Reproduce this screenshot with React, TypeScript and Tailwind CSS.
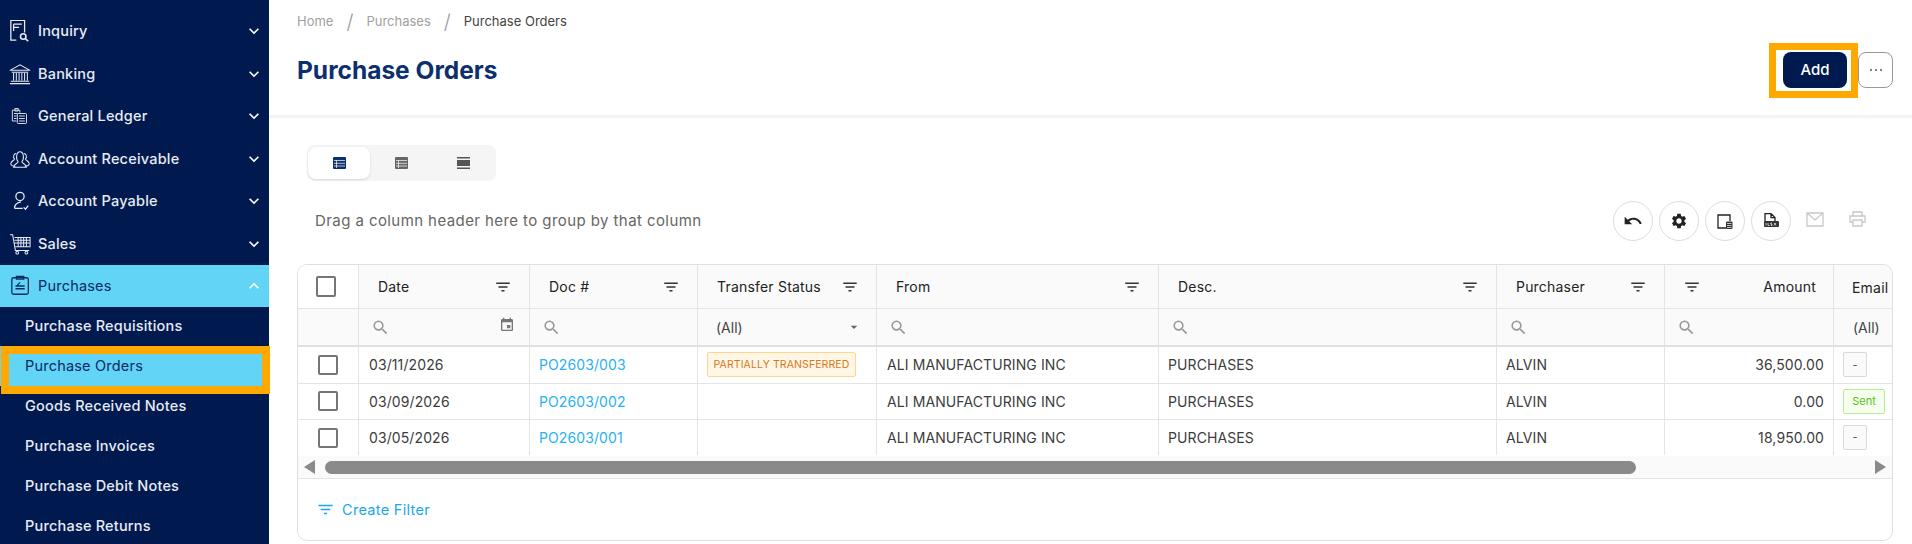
import {
  MdArrowDropDown,
  MdEvent,
  MdFilterList,
  MdKeyboardArrowDown,
  MdKeyboardArrowUp,
  MdSearch,
  MdSettings,
  MdUndo,
} from "react-icons/md";
import type { ReactNode } from "react";

const Ic = ({ children, size = 22 }: { children: ReactNode; size?: number }) => (
  <svg width={size} height={size} viewBox="0 0 24 24" fill="none" stroke="currentColor" strokeWidth="1.1" className="shrink-0">
    {children}
  </svg>
);

const menu = [
  {
    label: "Inquiry",
    icon: (
      <Ic>
        <path d="M8 22H2V0.500h15v13M5 4.500h9M5 8h6M5 4.500V12" strokeWidth="1.4" />
        <circle cx="15.500" cy="18" r="3" strokeWidth="1.700" />
        <path d="m18 20.500 3 2.500" strokeWidth="1.700" />
      </Ic>
    ),
  },
  {
    label: "Banking",
    icon: (
      <Ic>
        <path d="M1 8 12 2l11 6zM3 10h18M5 11v8M8 11v8M11 11v8M14 11v8M17 11v8M20 11v8M2 20h20M1 22.500h22" />
      </Ic>
    ),
  },
  {
    label: "General Ledger",
    icon: (
      <Ic size={20}>
        <path d="M9 18H4V5h9v3M7 3h4v3H7zM6 9h4M6 12h3M6 15h3" />
        <rect x="10" y="9" width="11" height="12" rx="1" />
        <path d="M12 12h7M12 15h7M12 18h7" />
      </Ic>
    ),
  },
  {
    label: "Account Receivable",
    icon: (
      <Ic>
        <path d="M7 20c-3 0-5-1-5-3 0-3 4-3 4-5-2-2-1-6 2-6M17 20c3 0 5-1 5-3 0-3-4-3-4-5 2-2 1-6-2-6" />
        <path d="M5 21c0-4 5-4 5-6-3-3-2-11 2-11s5 8 2 11c0 2 5 2 5 6z" />
      </Ic>
    ),
  },
  {
    label: "Account Payable",
    icon: (
      <Ic>
        <circle cx="12" cy="7" r="4.500" strokeWidth="1.400" />
        <path d="M6 20c0-3 2-6 7-7M6 20h9M16 19l2 2 3-4" strokeWidth="1.400" />
      </Ic>
    ),
  },
  {
    label: "Sales",
    icon: (
      <Ic>
        <path d="M1 2h3l3 17h15M6 5h17v10H7M10 5v10M13 5v10M16 5v10M19 5v10M6 8h17M6 11h17" />
        <circle cx="9" cy="21.500" r="1.500" />
        <circle cx="19" cy="21.500" r="1.500" />
      </Ic>
    ),
  },
];

const subMenu = ["Purchase Requisitions", "Purchase Orders", "Goods Received Notes", "Purchase Invoices", "Purchase Debit Notes", "Purchase Returns"];

const cols = "grid grid-cols-[61px_171px_168px_179px_282px_338px_168px_169px_60px]";

const Sidebar = () => (
  <aside className="relative w-[269px] shrink-0 bg-[#001a4f] pt-[10px] text-[#e8ebf2]">
    {menu.map((m) => (
      <div key={m.label} className="flex h-[42.500px] items-center pl-[9px] pr-[5px]">
        <span className="flex w-[29px] justify-start">{m.icon}</span>
        <span className="flex-1 text-[14.500px] font-medium tracking-[0.2px]">{m.label}</span>
        <MdKeyboardArrowDown size={20} className="text-white" />
      </div>
    ))}
    <div className="flex h-[42px] items-center bg-[#62d4f5] pl-[10px] pr-[5px] text-[#0c2a63]">
      <span className="flex w-[28px]">
        <Ic>
          <rect x="2" y="3" width="18" height="18" rx="2" strokeWidth="1.400" />
          <path d="M7 1.500h8v3H7zM6 15h10M6 12h10M11 8l-3 3" strokeWidth="1.400" />
        </Ic>
      </span>
      <span className="flex-1 text-[14.500px] tracking-[0.2px]">Purchases</span>
      <MdKeyboardArrowUp size={20} className="text-white" />
    </div>
    <div className="-mt-[1px]">
      {subMenu.map((s) => (
        <div
          key={s}
          className={
            s === "Purchase Orders"
              ? "flex h-10 items-center bg-[#62d4f5] pl-[25px] text-[14.500px] tracking-[0.2px] text-[#0c2a63]"
              : "flex h-10 items-center pl-[25px] text-[14.500px] font-medium tracking-[0.2px]"
          }
        >
          {s}
        </div>
      ))}
    </div>
    <div className="absolute left-[1px] top-[346px] h-[48px] w-[269px] border-[8px] border-[#ffa800]" />
  </aside>
);

const TableIcon = ({ active }: { active?: boolean }) => (
  <svg width="13" height="12" viewBox="0 0 13 12" className={active ? "text-[#0c2f6e]" : "text-[#666666]"}>
    <path fill="currentColor" d="M1 0h11a1 1 0 0 1 1 1v10a1 1 0 0 1-1 1H1a1 1 0 0 1-1-1V1a1 1 0 0 1 1-1Z" />
    <path stroke="#fff" strokeWidth="0.700" d="M1 3.500h11M1 6.300h11M1 9h11M3.500 3.500V11" />
  </svg>
);

const ViewTabs = () => (
  <div className="ml-[38px] mt-[27px] flex h-9 w-[189px] items-center rounded-lg bg-[#f5f5f5] pl-[1px]">
    <div className="flex h-8 w-[62px] items-center justify-center rounded-lg bg-white shadow-sm">
      <TableIcon active />
    </div>
    <div className="flex w-[62px] justify-center">
      <TableIcon />
    </div>
    <div className="flex w-[62px] justify-center">
      <svg width="13" height="12" viewBox="0 0 13 12" className="text-[#555555]">
        <path fill="currentColor" d="M0 0h13v1.500H0zM0 3h13v6H0zM0 10.500h13V12H0z" />
      </svg>
    </div>
  </div>
);

const RoundBtn = ({ children }: { children: ReactNode }) => (
  <div className="flex h-10 w-10 items-center justify-center rounded-full border border-[#dddddd] text-[#222222]">{children}</div>
);

const Toolbar = () => (
  <div className="mt-[20px] flex h-10 items-center justify-between pl-[46px] pr-[46px]">
    <span className="text-[15px] tracking-[0.42px] text-[#666666]">Drag a column header here to group by that column</span>
    <div className="flex items-center gap-[6px]">
      <RoundBtn>
        <MdUndo size={20} />
      </RoundBtn>
      <RoundBtn>
        <MdSettings size={18} />
      </RoundBtn>
      <RoundBtn>
        <svg width="16" height="15" viewBox="0 0 16 15" fill="none">
          <path d="M9 14H1V1h12v6" stroke="#222" strokeWidth="1.300" />
          <rect x="9" y="7.500" width="6.500" height="7.500" rx="1" fill="#333" />
          <path d="M10 9.500h4.500M10 11.500h4.500M10 13.500h4.500" stroke="#fff" strokeWidth="0.700" />
        </svg>
      </RoundBtn>
      <RoundBtn>
        <svg width="17" height="16" viewBox="0 0 17 16" fill="none">
          <path d="M2 8V.6h6l4 4V8M8 .6v4h4" stroke="#222" strokeWidth="1.300" />
          <rect x="1" y="8" width="15" height="6" rx="1" fill="#333" />
          <path d="M3 10v2.500M5 10v2.500h1.500M9 10H7.800v1.200H9v1.300H7.800M11 10l2 2.500M13 10l-2 2.500" stroke="#fff" strokeWidth="0.700" />
        </svg>
      </RoundBtn>
      <svg width="18" height="15" viewBox="0 0 18 15" fill="none" className="ml-[9px] -mt-[4px]">
        <path d="M1 1h16v13H1zM1 1l8 7 8-7" stroke="#c8c8c8" strokeWidth="1.300" />
      </svg>
      <svg width="17" height="16" viewBox="0 0 17 16" fill="none" className="ml-[19px] -mt-[4px]">
        <path d="M4 5V1h9v4M4 11H1V5h15v6h-3M4 9h9v6H4z" stroke="#c8c8c8" strokeWidth="1.300" />
      </svg>
    </div>
  </div>
);

const Filter = () => <MdFilterList size={18} className="shrink-0 text-[#333333]" />;
const Search = () => <MdSearch size={19} className="shrink-0 text-[#999999]" />;

const HeadCell = ({ label }: { label: string }) => (
  <div className="flex items-center justify-between border-r border-[#e4e4e4] pl-[19px] pr-[17px] text-[14px] tracking-[0.2px] text-[#222222]">
    <span className="whitespace-nowrap">{label}</span>
    <Filter />
  </div>
);

const SearchCell = ({ children }: { children?: ReactNode }) => (
  <div className="flex items-center justify-between border-r border-[#e4e4e4] pl-[12px] pr-[14px]">
    <Search />
    {children}
  </div>
);

const Checkbox = ({ size }: { size: string }) => <span className={`block rounded-[2px] border-2 border-[#757575] bg-white ${size}`} />;

const rows = [
  { date: "03/11/2026", doc: "PO2603/003", status: true, amount: "36,500.00", email: "-" },
  { date: "03/09/2026", doc: "PO2603/002", status: false, amount: "0.00", email: "Sent" },
  { date: "03/05/2026", doc: "PO2603/001", status: false, amount: "18,950.00", email: "-" },
];

const cell = "flex items-center border-r border-[#e4e4e4] text-[14px] tracking-[0.1px] text-[#3c3c3c] whitespace-nowrap";

const DataTable = () => (
  <div className="ml-[28px] mr-[19px] mt-[23px] h-[277px] overflow-hidden rounded-[10px] border border-[#e0e0e0]">
    <div className={`${cols} h-[44px] border-b border-[#e4e4e4] bg-[#fafafa]`}>
      <div className="flex items-center border-r border-[#e4e4e4] bg-white pl-[18px]">
        <Checkbox size="h-[21px] w-[20px]" />
      </div>
      <HeadCell label="Date" />
      <HeadCell label="Doc #" />
      <HeadCell label="Transfer Status" />
      <HeadCell label="From" />
      <HeadCell label="Desc." />
      <HeadCell label="Purchaser" />
      <div className="flex items-center justify-between border-r border-[#e4e4e4] pl-[18px] pr-[17px] text-[14px] tracking-[0.2px] text-[#222222]">
        <Filter />
        <span>Amount</span>
      </div>
      <div className="pl-[18px] pt-[12px] text-[14px] tracking-[0.2px] text-[#222222]">Email</div>
    </div>
    <div className={`${cols} h-[38px] border-b-2 border-[#e0e0e0] bg-[#fafafa]`}>
      <div className="border-r border-[#e4e4e4]" />
      <SearchCell>
        <MdEvent size={16} className="-mt-[4px] text-[#777777]" />
      </SearchCell>
      <SearchCell />
      <div className="flex items-center justify-between border-r border-[#e4e4e4] pl-[18px] pr-[14px] text-[14px] text-[#444444]">
        <span>(All)</span>
        <MdArrowDropDown size={16} className="text-[#666666]" />
      </div>
      <SearchCell />
      <SearchCell />
      <SearchCell />
      <SearchCell />
      <div className="flex items-center pl-[19px] text-[14px] text-[#444444]">(All)</div>
    </div>
    {rows.map((r, i) => (
      <div key={r.doc} className={`${cols} ${i === 2 ? "h-[36px] pb-[1px]" : "h-[36.500px] border-b border-[#e4e4e4]"}`}>
        <div className="flex items-center border-r border-[#e4e4e4] pl-[20px]">
          <Checkbox size="h-[20px] w-[20px]" />
        </div>
        <div className={`${cell} pl-[10px]`}>{r.date}</div>
        <div className={`${cell} pl-[9px] text-[#29b0f6]`}>{r.doc}</div>
        <div className={`${cell} pl-[9px]`}>
          {r.status && (
            <span className="flex h-[25px] w-[149px] items-center justify-center rounded-[2px] border border-[#ffd591] bg-[#fff7e6] text-[10.500px] tracking-[0.1px] text-[#d9761a]">
              PARTIALLY TRANSFERRED
            </span>
          )}
        </div>
        <div className={`${cell} pl-[10px]`}>ALI MANUFACTURING INC</div>
        <div className={`${cell} pl-[9px]`}>PURCHASES</div>
        <div className={`${cell} pl-[9px]`}>ALVIN</div>
        <div className={`${cell} justify-end pr-[9px]`}>{r.amount}</div>
        <div className="flex items-center pl-[9px]">
          {r.email === "Sent" ? (
            <span className="flex h-[25px] w-[42px] items-center justify-center rounded-[2px] border border-[#b7eb8f] bg-[#f6ffed] text-[11px] text-[#52c41a]">Sent</span>
          ) : (
            <span className="flex h-[25px] w-[24px] items-center justify-center rounded-[2px] border border-[#d9d9d9] bg-[#fafafa] text-[11px] text-[#555555]">-</span>
          )}
        </div>
      </div>
    ))}
    <div className="flex h-[23px] items-center border-b border-[#e4e4e4] bg-[#fafafa] pl-[6px] pr-[6px]">
      <span className="h-0 w-0 border-y-[7px] border-r-[11px] border-y-transparent border-r-[#8a8a8a]" />
      <span className="ml-[10px] h-[13px] w-[1311px] rounded-full bg-[#8a8a8a]" />
      <span className="ml-auto h-0 w-0 border-y-[7px] border-l-[11px] border-y-transparent border-l-[#8a8a8a]" />
    </div>
    <div className="flex h-[61px] items-center gap-[7px] pl-[18px] text-[14.500px] tracking-[0.3px] text-[#1aa7f0]">
      <MdFilterList size={19} />
      <span>Create Filter</span>
    </div>
  </div>
);

export default function App() {
  return (
    <div className="flex h-[544px] w-[1912px] overflow-hidden bg-white font-['Inter','Liberation_Sans',sans-serif]">
      <Sidebar />
      <main className="min-w-0 flex-1">
        <header className="h-[118px] border-b-[3px] border-[#f3f3f3] pl-[28px] pr-[19px]">
          <nav className="flex h-[44px] items-center text-[13px] text-[#a0a0a0]">
            <span>Home</span>
            <span className="mx-[13px] text-[20px] font-light text-[#999999]">/</span>
            <span>Purchases</span>
            <span className="mx-[13px] text-[20px] font-light text-[#999999]">/</span>
            <span className="text-[#444444]">Purchase Orders</span>
          </nav>
          <div className="mt-[8px] flex items-center justify-between">
            <h1 className="text-[24.500px] font-bold text-[#0c2f6e]">Purchase Orders</h1>
            <div className="flex items-center gap-[11px]">
              <div className="relative">
                <button className="h-9 w-16 rounded-lg bg-[#001a4f] text-[15px] font-medium text-white">Add</button>
                <div className="absolute -bottom-[10px] -left-[14px] -right-[11px] -top-[9px] border-[7px] border-[#ffa800]" />
              </div>
              <div className="flex h-9 w-[35px] items-center justify-center rounded-lg border border-[#999999] text-[#444444]">
                <svg width="14" height="4" viewBox="0 0 14 4" fill="currentColor">
                  <circle cx="2" cy="2" r="0.900" />
                  <circle cx="7" cy="2" r="0.900" />
                  <circle cx="12" cy="2" r="0.900" />
                </svg>
              </div>
            </div>
          </div>
        </header>
        <ViewTabs />
        <Toolbar />
        <DataTable />
      </main>
    </div>
  );
}
